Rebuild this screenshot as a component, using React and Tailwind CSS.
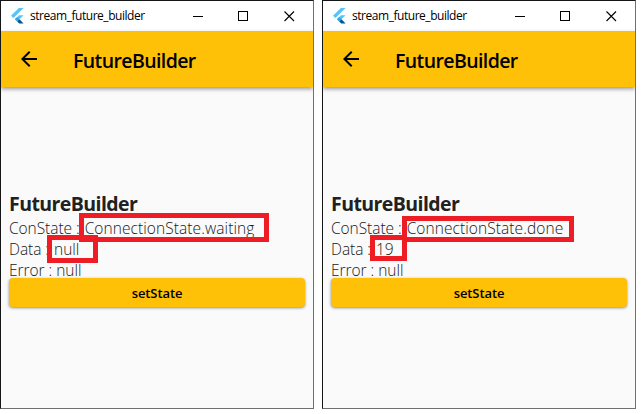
import React from 'react';

function FlutterLogo() {
  return (
    <svg width="13" height="16" viewBox="0 0 13 16" className="shrink-0">
      <path d="M7.9 0H12.6L2.4 10.1L0 7.8Z" fill="#54c5f8" />
      <path d="M8 7.2H12.6L8.5 11.3L6.2 13.6L3.9 11.3Z" fill="#54c5f8" />
      <path d="M3.9 11.3L6.2 9L8.5 11.3L6.2 13.6Z" fill="#35a5e5" />
      <path d="M6.2 13.6L8.5 11.3L12.6 15.6H8.2Z" fill="#01579b" />
    </svg>
  );
}

function TitleBar() {
  return (
    <div className="flex h-[30px] items-center bg-white pl-[10px] pr-[18px]">
      <FlutterLogo />
      <span className="ml-[6px] w-[116px] whitespace-nowrap font-['Open_Sans',sans-serif] text-[12px] leading-[16px] tracking-[-0.46px] text-black">
        stream_future_builder
      </span>
      <svg width="102" height="12" viewBox="0 0 102 12" className="ml-auto" fill="none" stroke="#000" shapeRendering="crispEdges">
        <path d="M0 6.5H10" />
        <rect x="45.5" y="1.5" width="9" height="9" />
        <path d="M91.5 1.5L101 11M101 1.5L91.5 11" shapeRendering="auto" strokeWidth="1.1" />
      </svg>
    </div>
  );
}

function AppBar() {
  return (
    <div className="flex h-14 items-center bg-[#ffc107] pl-4 shadow-[0_2px_4px_rgba(0,0,0,0.4)]">
      <svg width="24" height="24" viewBox="0 0 24 24" fill="#000">
        <path d="M20 11H7.83l5.59-5.59L12 4l-8 8 8 8 1.41-1.41L7.83 13H20v-2z" />
      </svg>
      <span className="ml-8 mt-[3px] whitespace-nowrap font-['Open_Sans',sans-serif] text-[19.5px] font-[550] leading-6 tracking-[-0.6px] text-black">
        FutureBuilder
      </span>
    </div>
  );
}

function Row({ label, value, gap }) {
  return (
    <div className="flex h-[21px] items-center whitespace-pre leading-[21px]">
      <span className="tracking-[-0.05px]">{label}</span>
      <span className={gap}>{value}</span>
    </div>
  );
}

function Window({ state, data, dataGap, children }) {
  return (
    <div className="relative h-[409px] w-[314px] overflow-hidden border border-b-[#707070] border-l-[#161616] border-r-[#707070] border-t-[#161616] bg-[#fafafa]">
      <TitleBar />
      <AppBar />
      <div className="px-2 pt-[103px] font-['Open_Sans',sans-serif] text-[15.5px] font-[350] text-[#181818]">
        <div className="h-[28px] whitespace-nowrap text-[19.5px] font-bold leading-[27px] tracking-[-0.57px] text-[#212121]">
          FutureBuilder
        </div>
        <Row label="ConState :" value={state} gap="ml-[5px] tracking-[0.08px]" />
        <Row label="Data :" value={data} gap={dataGap} />
        <Row label="Error :" value="null" gap="ml-[4px]" />
        <button className="-mt-[3px] flex h-[29px] w-full items-center justify-center rounded-[4px] bg-[#ffc107] pt-px text-[13px] font-semibold leading-[18px] tracking-[-0.1px] text-black shadow-[0_1px_3px_rgba(0,0,0,0.45)]">
          setState
        </button>
      </div>
      {children}
    </div>
  );
}

export default function App() {
  return (
    <div className="flex h-[414px] w-[642px] items-start gap-2 overflow-hidden bg-white">
      <Window state="ConnectionState.waiting" data="null" dataGap="ml-[5px]">
        <div className="absolute left-[78px] top-[212px] h-[29px] w-[190px] border-[5px] border-[#ee1c25]" />
        <div className="absolute left-[46px] top-[234px] h-[28px] w-[51px] border-[5px] border-[#ee1c25]" />
      </Window>
      <Window state="ConnectionState.done" data="19" dataGap="ml-[5px]">
        <div className="absolute left-[79px] top-[215px] h-[26px] w-[172px] border-[5px] border-[#ee1c25]" />
        <div className="absolute left-[47px] top-[234px] h-[26px] w-[37px] border-[5px] border-[#ee1c25]" />
      </Window>
    </div>
  );
}
